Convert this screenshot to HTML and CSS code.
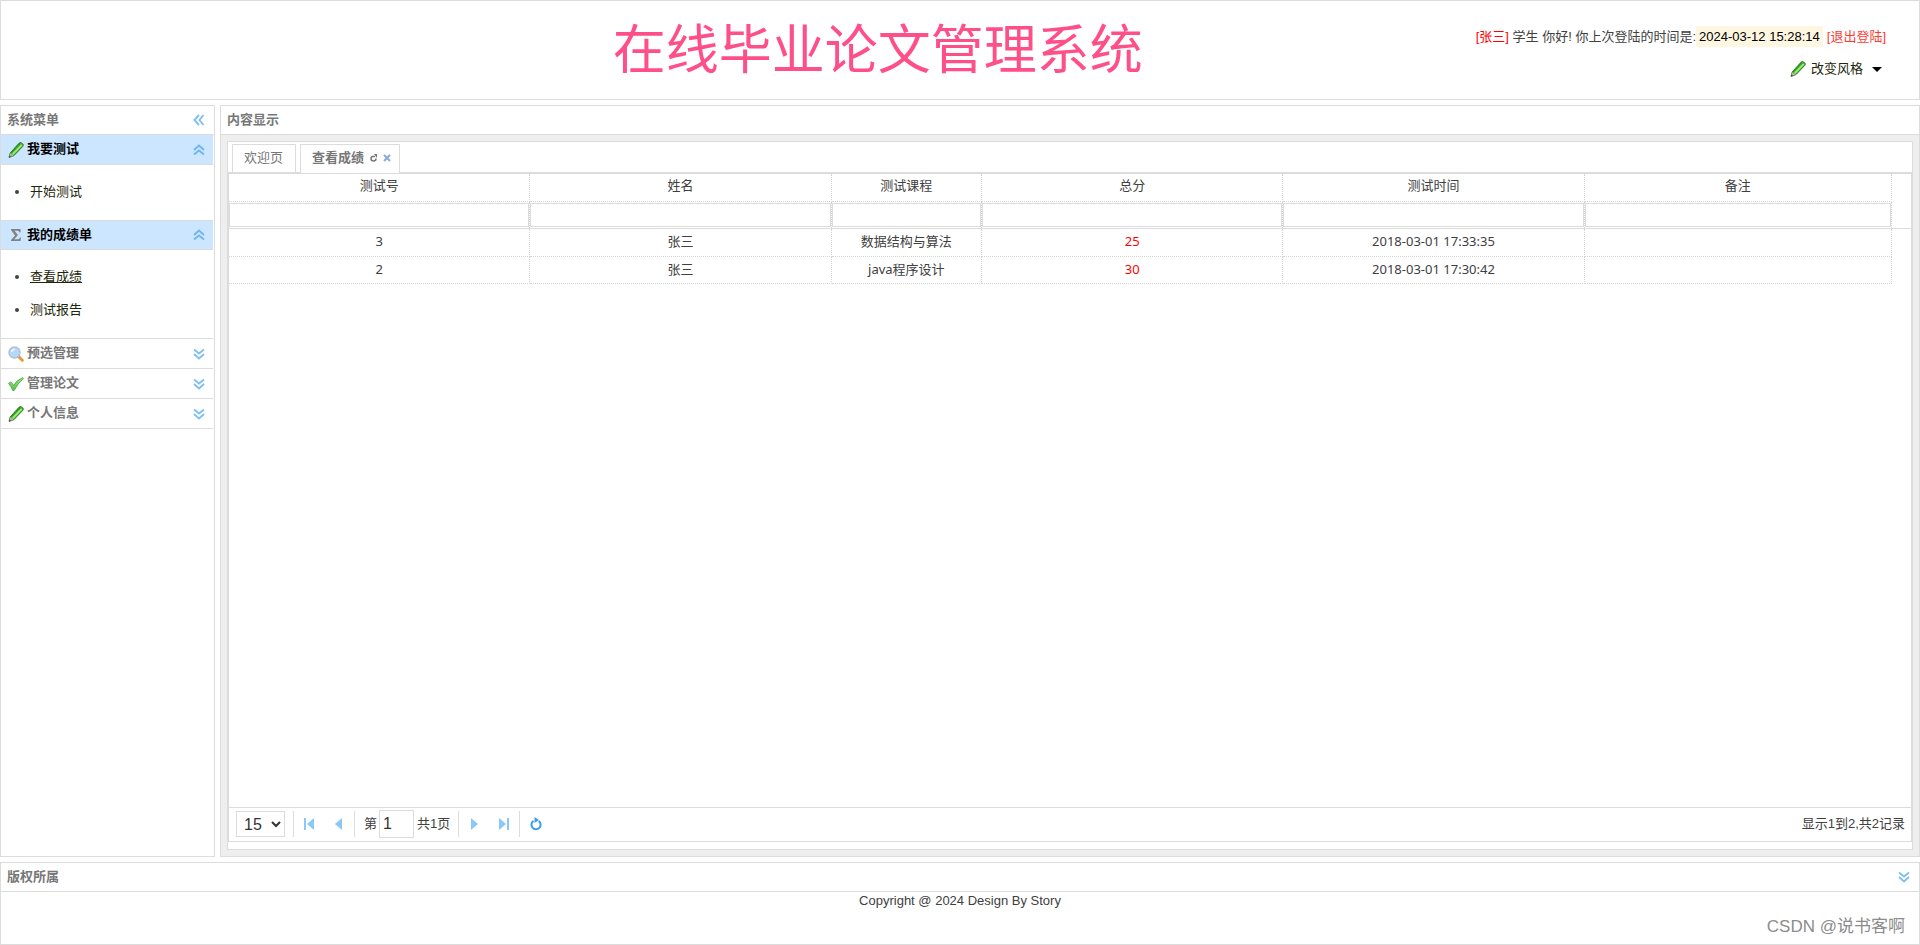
FILE: index.html
```
<!DOCTYPE html>
<html lang="zh-CN">
<head>
<meta charset="utf-8">
<title>在线毕业论文管理系统</title>
<link rel="stylesheet" href="styles.css">
</head>
<body>
<svg class="defs" width="0" height="0" aria-hidden="true">
  <defs>
    <linearGradient id="gc" x1="0" y1="0" x2="0" y2="1"><stop offset="0" stop-color="#a5ec78"/><stop offset="1" stop-color="#55c04a"/></linearGradient>
    <symbol id="pencil" viewBox="0 0 16 16"><path d="M1 15.5 2.2 11 11 1.2Q12 .3 13.2.8L15 2.2Q15.8 3.2 14.8 4.4L6 13.6Z" fill="#3fae2c" stroke="#2b7a28" stroke-width=".9"/><path d="M4.800 12.200 13.800 2.800" stroke="#a4e87a" stroke-width="1.800"/><path d="M3 10.800 11.500 1.600" stroke="#1f8a1c" stroke-width="1"/><path d="M1 15.500 2.200 11.500Q4.500 11.500 5.500 13.600Z" fill="#b9b59c"/><path d="M1 15.500 1.600 13.400 3 14.800Z" fill="#333"/></symbol>
    <symbol id="sigma" viewBox="0 0 16 16"><path d="M3 2H12.500V5.500H11.500Q11.300 3.800 9.600 3.800H6.500L10 8 6.200 12.300H10Q11.600 12.300 12 10.500H13L12.500 14H3V13L7 8.500 3 3Z" fill="#828282"/></symbol>
    <symbol id="search" viewBox="0 0 16 16"><path d="M10.500 10.500 14.300 14.300" stroke="#e59a3c" stroke-width="3" stroke-linecap="round"/><circle cx="6.500" cy="6.500" r="5.500" fill="#b4d8fb" stroke="#b3bfce" stroke-width="1.400"/><path d="M3.500 6Q4 3.500 6.800 3.200" fill="none" stroke="#edf7ff" stroke-width="1.500"/></symbol>
    <symbol id="check" viewBox="0 0 17 16"><path d="M.6 7.400 3 5.800Q5 7.500 6 9.600 9 4 15.600 1.200L16.500 2.200Q10.500 7 6.500 15H5Q3.500 10.500.6 7.400Z" fill="url(#gc)" stroke="#43a047" stroke-width=".9"/></symbol>
    <symbol id="down" viewBox="0 0 12 12"><path d="M1 1.500 6 5.500 11 1.500M1 6 6 10.500 11 6" fill="none" stroke="#7fc0f3" stroke-width="1.900"/></symbol>
    <symbol id="up" viewBox="0 0 12 12"><path d="M1 6 6 1.500 11 6M1 10.500 6 6.500 11 10.500" fill="none" stroke="#6fb6f0" stroke-width="1.900"/></symbol>
    <symbol id="left" viewBox="0 0 12 12"><path d="M6 1 1.500 6 6 11M10.500 1 6.500 6 10.500 11" fill="none" stroke="#7fc0f3" stroke-width="1.900"/></symbol>
  </defs>
</svg>
<div class="app">
  <header class="north">
    <h1 class="site-title">在线毕业论文管理系统</h1>
    <div class="user">
      <p class="welcome"><span class="name">[张三]</span> 学生 你好! 你上次登陆的时间是:<time class="last-login">2024-03-12 15:28:14</time><a class="logout" href="#">[退出登陆]</a></p>
      <button class="theme" type="button"><svg class="ico"><use href="#pencil"/></svg>改变风格<span class="caret"></span></button>
    </div>
  </header>

  <main class="middle">
    <nav class="west">
      <div class="panel-head"><span>系统菜单</span><button class="tool" type="button" aria-label="收起菜单"><svg><use href="#left"/></svg></button></div>
      <div class="accordion">
        <button class="acc-head open" type="button"><svg class="ico"><use href="#pencil"/></svg><span>我要测试</span><svg class="arrow"><use href="#up"/></svg></button>
        <ul class="acc-body"><li><a href="#">开始测试</a></li></ul>
        <button class="acc-head open next" type="button"><svg class="ico"><use href="#sigma"/></svg><span>我的成绩单</span><svg class="arrow"><use href="#up"/></svg></button>
        <ul class="acc-body"><li><a class="current" href="#">查看成绩</a></li><li><a href="#">测试报告</a></li></ul>
        <button class="acc-head next tall" type="button"><svg class="ico"><use href="#search"/></svg><span>预选管理</span><svg class="arrow"><use href="#down"/></svg></button>
        <button class="acc-head" type="button"><svg class="ico"><use href="#check"/></svg><span>管理论文</span><svg class="arrow"><use href="#down"/></svg></button>
        <button class="acc-head" type="button"><svg class="ico"><use href="#pencil"/></svg><span>个人信息</span><svg class="arrow"><use href="#down"/></svg></button>
      </div>
    </nav>

    <section class="center">
      <div class="panel-head"><span>内容显示</span></div>
      <div class="center-body">
        <div class="tabs">
          <div class="tab-strip" role="tablist">
            <div class="tab" role="tab">欢迎页</div>
            <div class="tab active" role="tab"><span>查看成绩</span>
              <button type="button" aria-label="刷新"><svg width="8" height="8" viewBox="0 0 8 8"><path d="M5 2.500H3Q1 2.500 1 4.500 1 7 3.500 7 6 7 6 4.500" fill="none" stroke="#777" stroke-width="1.500"/><path d="M4 0 7 0V4Z" fill="#777"/></svg></button>
              <button type="button" aria-label="关闭"><svg width="8" height="8" viewBox="0 0 8 8"><path d="M1 1 7 7M7 1 1 7" stroke="#8ba9d6" stroke-width="2"/></svg></button>
            </div>
          </div>
          <div class="grid">
            <div class="grid-head">
              <table>
                <colgroup><col class="w"><col class="w"><col class="n"><col class="w"><col class="w"><col></colgroup>
                <thead>
                  <tr><th>测试号</th><th>姓名</th><th>测试课程</th><th>总分</th><th>测试时间</th><th>备注</th></tr>
                  <tr class="filters"><td><input type="text" aria-label="测试号"></td><td><input type="text" aria-label="姓名"></td><td><input type="text" aria-label="测试课程"></td><td><input type="text" aria-label="总分"></td><td><input type="text" aria-label="测试时间"></td><td><input type="text" aria-label="备注"></td></tr>
                </thead>
              </table>
            </div>
            <div class="grid-body">
              <table>
                <colgroup><col class="w"><col class="w"><col class="n"><col class="w"><col class="w"><col></colgroup>
                <tbody>
                  <tr><td>3</td><td>张三</td><td>数据结构与算法</td><td class="score">25</td><td>2018-03-01 17:33:35</td><td></td></tr>
                  <tr><td>2</td><td>张三</td><td>java程序设计</td><td class="score">30</td><td>2018-03-01 17:30:42</td><td></td></tr>
                </tbody>
              </table>
            </div>
            <div class="pager">
              <select aria-label="每页记录数"><option>15</option></select>
              <span class="sep"></span>
              <button type="button" aria-label="首页"><svg width="10" height="12" viewBox="0 0 10 12"><path d="M0 0H2V12H0ZM10 0V12L3 6Z" fill="#8cc8f5"/></svg></button>
              <button type="button" aria-label="上一页"><svg width="10" height="12" viewBox="0 0 10 12"><path d="M8 0V12L1 6Z" fill="#8cc8f5"/></svg></button>
              <span class="sep"></span>
              <label class="page-no">第<input type="text" value="1"></label><span class="total">共1页</span>
              <span class="sep"></span>
              <button type="button" aria-label="下一页"><svg width="10" height="12" viewBox="0 0 10 12"><path d="M2 0V12L9 6Z" fill="#8cc8f5"/></svg></button>
              <button type="button" aria-label="末页"><svg width="10" height="12" viewBox="0 0 10 12"><path d="M8 0H10V12H8ZM0 0V12L7 6Z" fill="#8cc8f5"/></svg></button>
              <span class="sep"></span>
              <button class="reload" type="button" aria-label="刷新"><svg width="12" height="14" viewBox="0 0 12 14"><path d="M3.500 3.800A4.600 4.600 0 1 0 8.800 4" fill="none" stroke="#3d9fe6" stroke-width="2"/><path d="M4.500 0 9 3 4.500 6Z" fill="#3d9fe6"/></svg></button>
              <span class="info">显示1到2,共2记录</span>
            </div>
          </div>
        </div>
      </div>
    </section>
  </main>

  <footer class="south">
    <div class="panel-head"><span>版权所属</span><button class="tool" type="button" aria-label="收起"><svg><use href="#down"/></svg></button></div>
    <p class="copyright">Copyright @ 2024 Design By Story</p>
    <div class="watermark">CSDN @说书客啊</div>
  </footer>
</div>
</body>
</html>
```
FILE: styles.css
```
* { box-sizing: border-box; }

body {
  margin: 0;
  color: #404040;
  background: #fff;
  font: 13px/20px "Liberation Sans", "Noto Sans CJK SC", sans-serif;
}

h1, p, ul { margin: 0; padding: 0; }
a { color: inherit; text-decoration: none; }
button { padding: 0; border: 0; background: none; color: inherit; font: inherit; cursor: pointer; }
svg { display: block; flex: none; }
.defs { position: absolute; }
.ico { width: 16px; height: 16px; }

.app {
  display: flex;
  flex-direction: column;
  gap: 5px;
  height: 100vh;
}

.north, .west, .center, .south { border: 1px solid #dcdcdc; }

/* Top banner */
.north {
  display: grid;
  grid-template-columns: 32% auto 1fr;
  height: 100px;
  flex: none;
}
.site-title {
  grid-column: 2;
  margin-left: -2px;
  padding-top: 16px;
  color: #ff4f89;
  font-size: 53px;
  font-weight: 400;
  line-height: 68px;
  white-space: nowrap;
}
.user {
  display: flex;
  flex-direction: column;
  align-items: flex-end;
  gap: 12px;
  padding: 26px 33px 0 0;
  white-space: nowrap;
}
.name { color: #f00; }
.last-login { padding: 3px; background: #fdf6e0; color: #000; }
.logout { margin-left: 4px; color: #ff3b30; }
.theme { display: flex; align-items: center; gap: 5px; margin-right: 4px; color: #1c2608; }
.caret { margin-left: 4px; border: 5px solid transparent; border-top-color: #000; border-bottom: 0; }

/* Panels */
.middle { display: flex; gap: 5px; flex: 1; min-height: 0; }
.panel-head {
  display: flex;
  align-items: center;
  justify-content: space-between;
  height: 29px;
  flex: none;
  padding: 0 9px 0 6px;
  border-bottom: 1px solid #dcdcdc;
  color: #777;
  font-weight: 700;
}
.panel-head span { padding-bottom: 1px; }
.tool svg, .arrow { width: 12px; height: 12px; }

/* Side menu */
.west { width: 215px; flex: none; }
.accordion { margin-right: 1px; }
.acc-head {
  display: flex;
  align-items: center;
  gap: 3px;
  width: 100%;
  height: 30px;
  padding: 0 8px 0 7px;
  border-bottom: 1px solid #dcdcdc;
  color: #777;
  font-weight: 700;
}
.acc-head span { padding-bottom: 1px; }
.acc-head .arrow { margin-left: auto; }
.acc-head.open { background: #cce6ff; color: #000; }
.acc-head.next { border-top: 1px solid #dcdcdc; }
.acc-head.tall { height: 31px; }
.acc-body {
  display: grid;
  gap: 13px;
  padding: 17px 0 18px 29px;
  color: #404040;
}
.acc-body li::marker { color: #444; }
.acc-body a { color: #1c2608; }
.acc-body .current { text-decoration: underline; }

/* Content area */
.center { display: flex; flex-direction: column; flex: 1; min-width: 0; }
.center-body { display: flex; flex: 1; min-height: 0; padding: 6px; background: #eee; }
.tabs {
  display: flex;
  flex-direction: column;
  flex: 1;
  min-width: 0;
  border: 1px solid #dcdcdc;
  padding-bottom: 7px;
  background: #fff;
}
.tab-strip {
  display: flex;
  gap: 4px;
  padding: 2px 4px 0;
  border-bottom: 1px solid #dcdcdc;
}
.tab {
  display: flex;
  align-items: center;
  gap: 5px;
  height: 28px;
  padding: 0 12px 1px 11px;
  border: 1px solid #dcdcdc;
  border-bottom: 0;
  color: #777;
}
.tab.active { height: 29px; margin-bottom: -1px; padding: 0 8px 2px 11px; background: #fff; }
.tab.active span { margin-right: 1px; font-weight: 700; }
.grid {
  display: flex;
  flex-direction: column;
  flex: 1;
  min-height: 0;
  border: 1px solid #dcdcdc;
}
.grid table {
  width: 100%;
  table-layout: fixed;
  border-collapse: separate;
  border-spacing: 0;
}
.w { width: 18.12%; }
.n { width: 9.04%; }
.grid-head { padding-right: 19px; border-bottom: 1px solid #dcdcdc; }
.grid-body { flex: 1; padding-right: 19px; font-family: "Noto Sans", "Noto Sans CJK SC", sans-serif; }
.grid th, .grid td {
  height: 28px;
  padding: 0 0 3px;
  border-right: 1px dotted #d4d4d4;
  border-bottom: 1px dotted #d4d4d4;
  font-weight: 400;
  text-align: center;
}
.grid-body tr + tr td { height: 27px; padding-bottom: 2px; }
.grid .filters td { height: 26px; padding: 1px 0 0; border-bottom: 0; vertical-align: top; }
.filters input { display: block; width: 100%; height: 24px; border: 1px solid #dcdcdc; }
.grid .score { color: #f00; }

/* Paging bar */
.pager {
  display: flex;
  align-items: center;
  height: 34px;
  flex: none;
  padding: 0 6px 1px 7px;
  border-top: 1px solid #dcdcdc;
}
.pager select {
  width: 49px;
  height: 26px;
  margin-right: 8px;
  padding-left: 3px;
  border: 1px solid #dcdcdc;
  background: #fff;
  color: #333;
  font: 16px "Liberation Sans", sans-serif;
}
.sep { width: 1px; height: 26px; background: #dcdcdc; }
.pager button { display: grid; place-items: center; width: 30px; height: 26px; }
.pager .reload { width: 32px; }
.page-no { display: flex; align-items: center; gap: 2px; margin-left: 9px; }
.page-no input {
  width: 35px;
  height: 28px;
  padding: 0 3px;
  border: 1px solid #dcdcdc;
  color: #333;
  font: 16px "Liberation Sans", sans-serif;
}
.total { margin: 0 8px 0 3px; }
.info { margin-left: auto; }

/* Footer */
.south { position: relative; height: 83px; flex: none; }
.copyright { text-align: center; line-height: 18px; }
.watermark {
  position: absolute;
  right: 14px;
  bottom: 5px;
  color: #8c8c8c;
  font-size: 17px;
  line-height: 24px;
}
```
